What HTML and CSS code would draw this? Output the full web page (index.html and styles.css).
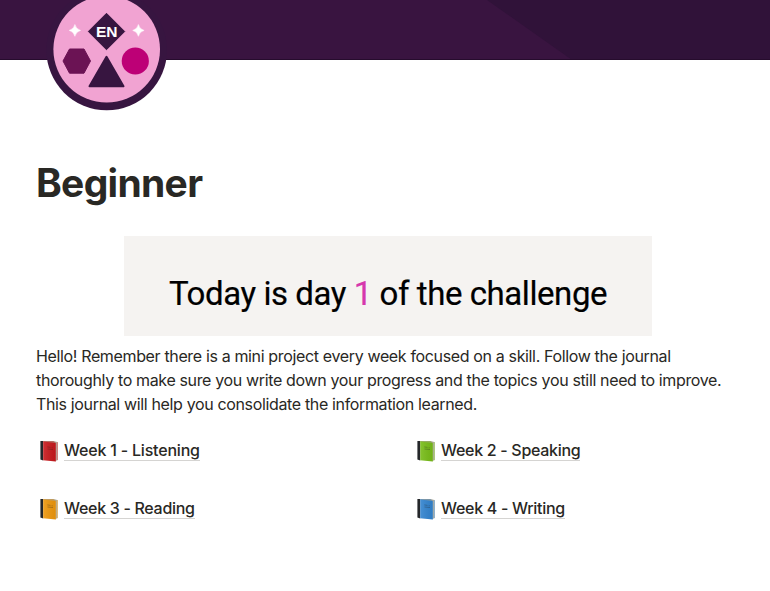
FILE: index.html
```
<!DOCTYPE html>
<html lang="en">
<head>
<meta charset="utf-8">
<title>Beginner</title>
<link rel="stylesheet" href="styles.css">
</head>
<body>
<svg class="defs" width="0" height="0" aria-hidden="true">
  <linearGradient id="shade" x1="0" y1="0" x2="1" y2="0"><stop offset="0" stop-color="#fff" stop-opacity=".1"/><stop offset="1" stop-color="#000" stop-opacity=".06"/></linearGradient>
  <symbol id="book" viewBox="0 0 20 22">
    <path d="M1.4 .9H4.2V20.4L1.4 19.4Z" fill="#25272a"/>
    <path d="M13.5 .9L18.6 2V19.9L16.2 21.3V3L12 1.8Z" fill="#b3b1a3"/>
    <path d="M17.8 2.4L18.6 2V19.9L17.8 20.4Z" fill="currentColor" opacity=".7"/>
    <path d="M4.2 .9H14L16.8 2.8V21.5L4.2 20.3Z" fill="currentColor"/>
    <path d="M4.2 .9H14L16.8 2.8V21.5L4.2 20.3Z" fill="url(#shade)"/>
    <path d="M4.2 .9H14L18.2 2.2L16.8 3L4.2 1.5Z" fill="#aaa391" opacity=".6"/>
    <path d="M8.3 6.9L11.5 7.4M12.7 7.6L13.7 7.8M8.5 9L14 9.5" stroke="#252525" stroke-width=".6" opacity=".5"/>
  </symbol>
</svg>
<header class="cover">
  <svg class="cover-art" viewBox="0 0 770 60">
    <path d="M487 0H770V60H572Z" fill="#301239"/>
    <path d="M0 59.5H770" stroke="#260c2d"/>
  </svg>
</header>
<main class="page">
  <svg class="logo" viewBox="0 0 122 122">
    <circle cx="60.7" cy="50" r="60.3" fill="#371540"/>
    <circle cx="60.7" cy="49.3" r="53.3" fill="#f1a3d2"/>
    <path d="M60.5 13.3L78.7 31.5L60.5 49.7L42.3 31.5Z" fill="#371540" stroke="#371540" stroke-linejoin="round"/>
    <text x="60.7" y="37.2">EN</text>
    <path d="M60.5 56.8L77.5 86.3H43.5Z" fill="#371540" stroke="#371540" stroke-width="2" stroke-linejoin="round"/>
    <path d="M23.5 49H38L44.5 61L38 73.2H23.5L17 61Z" fill="#6b1354" stroke="#6b1354" stroke-linejoin="round"/>
    <circle cx="89.3" cy="61" r="13.6" fill="#bd0076"/>
    <path d="M28.9 24.5Q30 29.3 34.6 30.4Q30 31.5 28.9 36.3Q27.8 31.5 23.2 30.4Q27.8 29.3 28.9 24.5ZM92.4 24.5Q93.5 29.3 98.1 30.4Q93.5 31.5 92.4 36.3Q91.3 31.5 86.7 30.4Q91.3 29.3 92.4 24.5Z" fill="#fff" stroke="#fff" stroke-width=".5"/>
  </svg>
  <h1>Beginner</h1>
  <section class="banner">Today is day <span>1</span> of the challenge</section>
  <p>Hello! Remember there is a mini project every week focused on a skill. Follow the journal<br>thoroughly to make sure you write down your progress and the topics you still need to improve.<br>This journal will help you consolidate the information learned.</p>
  <nav class="weeks">
    <a class="red"><svg><use href="#book"/></svg><span>Week 1 - Listening</span></a>
    <a class="green"><svg><use href="#book"/></svg><span>Week 2 - Speaking</span></a>
    <a class="orange"><svg><use href="#book"/></svg><span>Week 3 - Reading</span></a>
    <a class="blue"><svg><use href="#book"/></svg><span>Week 4 - Writing</span></a>
  </nav>
</main>
</body>
</html>
```
FILE: styles.css
```
body { margin: 0; background: #fff; color: #292824; font-family: Inter, sans-serif; overflow: hidden; }
.defs { position: absolute; }
.cover { height: 60px; background: #391440; }
.cover-art { display: block; width: 770px; height: 60px; }
.page { padding: 0 36px; }
.logo { display: block; width: 122px; height: 122px; margin: -60px 0 0 10px; position: relative; }
.logo text { font: bold 15.5px "Liberation Sans", sans-serif; fill: #fff; text-anchor: middle; }
h1 { margin: 37px 0 0; font-size: 39px; line-height: 48px; font-weight: 700; letter-spacing: -.7px; }
.banner { width: 528px; height: 100px; margin: 29px 0 0 88px; background: #f5f3f1; color: #000; font: 33px/116px Roboto, sans-serif; letter-spacing: -.43px; text-align: center; white-space: nowrap; -webkit-text-stroke: .2px; }
.banner span { color: #d638ad; }
p { margin: 8px 0 0; font-size: 16px; line-height: 24px; letter-spacing: -.354px; white-space: nowrap; }
.weeks { display: grid; grid-template-columns: 377px 1fr; row-gap: 34px; margin-top: 22px; }
.weeks a { display: flex; align-items: center; height: 24px; font-size: 16px; font-weight: 500; padding-left: 3px; }
.weeks svg { width: 20px; height: 22px; margin: 1px 5px 0 0; }
.weeks span { border-bottom: 1px solid #d5d4d2; line-height: 20px; letter-spacing: -.3px; }
.weeks .red span { letter-spacing: -.2px; }
.red { --c: #c8191d; } .green { --c: #78bd18; } .orange { --c: #ee970c; } .blue { --c: #3284d0; }
.weeks svg { color: var(--c); }
```
